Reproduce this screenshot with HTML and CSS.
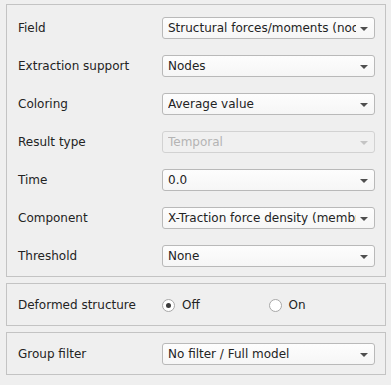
FILE: index.html
```html
<!DOCTYPE html>
<html lang="en">

<head>
  <meta charset="UTF-8">
  <meta name="viewport" content="width=device-width, initial-scale=1.0">
  <title>Result settings</title>
  <link rel="stylesheet" href="styles.css">
</head>

<body>
  <div class="panel">
    <div class="group fields">
      <div class="label">Field</div>
      <div class="combo"><span class="value">Structural forces/moments (nodes)</span><span class="arrow"></span></div>

      <div class="label">Extraction support</div>
      <div class="combo"><span class="value">Nodes</span><span class="arrow"></span></div>

      <div class="label">Coloring</div>
      <div class="combo"><span class="value">Average value</span><span class="arrow"></span></div>

      <div class="label">Result type</div>
      <div class="combo disabled"><span class="value">Temporal</span><span class="arrow"></span></div>

      <div class="label">Time</div>
      <div class="combo"><span class="value">0.0</span><span class="arrow"></span></div>

      <div class="label">Component</div>
      <div class="combo"><span class="value">X-Traction force density (membrane)</span><span class="arrow"></span></div>

      <div class="label">Threshold</div>
      <div class="combo"><span class="value">None</span><span class="arrow"></span></div>
    </div>

    <div class="group deformed">
      <div class="label">Deformed structure</div>
      <div class="radios">
        <label class="radio checked"><span class="dot"></span>Off</label>
        <label class="radio"><span class="dot"></span>On</label>
      </div>
    </div>

    <div class="group filter">
      <div class="label">Group filter</div>
      <div class="combo"><span class="value">No filter / Full model</span><span class="arrow"></span></div>
    </div>
  </div>
</body>

</html>
```

FILE: styles.css
```css
body {
  font-family: "DejaVu Sans", "Liberation Sans", sans-serif;
  font-size: 12px;
  margin: 0;
  background-color: #efefef;
  color: #232323;
}

.panel {
  padding: 4px 5px 0 6px;
}

.group {
  border: 1px solid #c3c3c3;
  display: grid;
  grid-template-columns: 144px minmax(0, 1fr);
  align-items: center;
  padding: 12px 10px 9px 11px;
  margin-bottom: 6px;
}

.fields {
  row-gap: 16px;
}

.deformed {
  padding-top: 10px;
  padding-bottom: 9px;
}

.filter {
  padding-top: 10px;
  padding-bottom: 9px;
}

.label {
  line-height: 22px;
  white-space: nowrap;
}

.combo {
  display: flex;
  align-items: center;
  min-width: 0;
  height: 22px;
  box-sizing: border-box;
  border: 1px solid #b9b9b9;
  border-radius: 3px;
  background: linear-gradient(#fdfdfd, #f6f6f6);
  padding: 0 6px 0 5px;
}

.combo .value {
  flex: 1;
  min-width: 0;
  overflow: hidden;
  white-space: nowrap;
  margin-right: 4px;
}

.combo .arrow {
  flex: none;
  width: 0;
  height: 0;
  border-left: 4px solid transparent;
  border-right: 4px solid transparent;
  border-top: 4px solid #4f4f4f;
  margin-top: 1px;
}

.combo.disabled {
  border-color: #d2d2d2;
  background: #f0f0f0;
  color: #b4b4b4;
}

.combo.disabled .arrow {
  border-top-color: #c4c4c4;
}

.radios {
  display: flex;
  height: 22px;
  align-items: center;
}

.radio {
  display: flex;
  align-items: center;
  width: 109px;
}

.radio .dot {
  width: 13px;
  height: 13px;
  box-sizing: border-box;
  border: 1px solid #a8a8a8;
  border-radius: 50%;
  background-color: #fff;
  margin-right: 7px;
  display: flex;
  align-items: center;
  justify-content: center;
}

.radio.checked .dot::after {
  content: "";
  width: 5px;
  height: 5px;
  border-radius: 50%;
  background-color: #3c3c3c;
}
```
